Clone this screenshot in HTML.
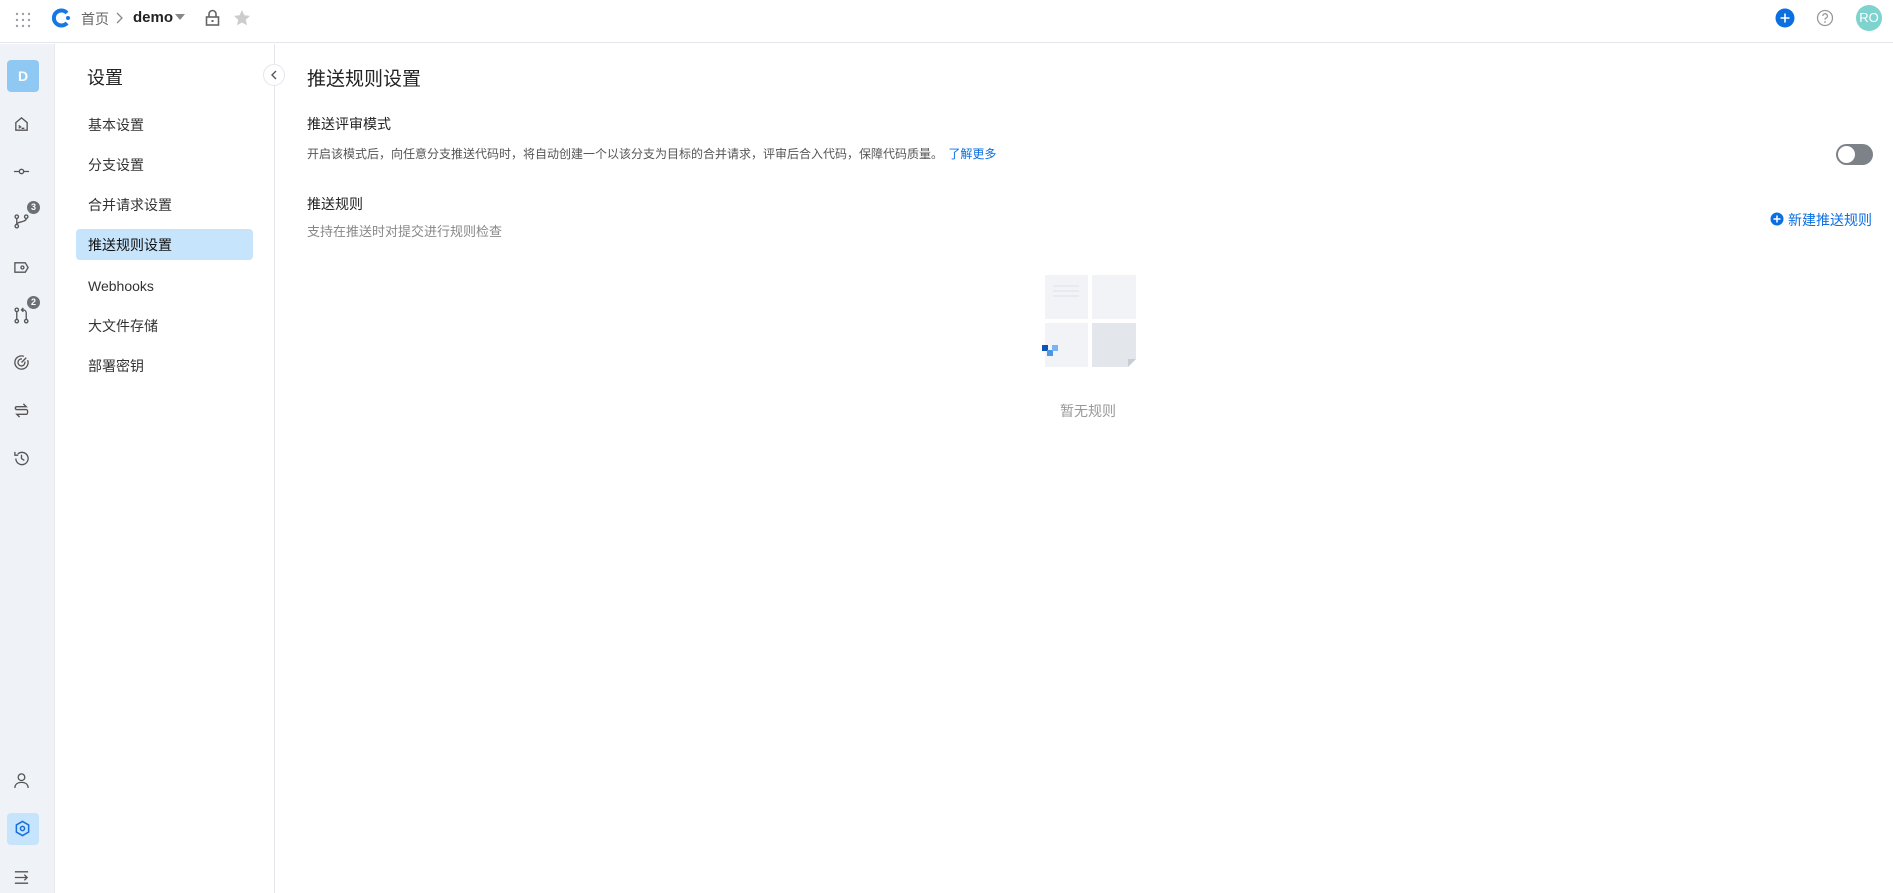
<!DOCTYPE html>
<html><head><meta charset="utf-8"><style>
*{margin:0;padding:0;box-sizing:border-box}
body{width:1893px;height:893px;overflow:hidden;background:#fff;font-family:"Liberation Sans","Noto Sans CJK SC",sans-serif;color:#1f2329;position:relative}
.abs{position:absolute}
.hdr{left:0;top:0;width:1893px;height:43px;border-bottom:1px solid #e5e6eb;background:#fff}
.rail{left:0;top:44px;width:55px;height:849px;background:#eff2f6;border-right:1px solid #e8eaee}
.nav{left:55px;top:44px;width:220px;height:849px;background:#fff;border-right:1px solid #e5e6eb}
.ni{position:absolute;left:88px;font-size:14px;color:#333;line-height:20px}
.ic{position:absolute;left:13px;width:17px;height:17px}
.badge{position:absolute;width:13px;height:13px;border-radius:50%;background:#6b7075;color:#fff;font-size:9px;font-weight:bold;text-align:center;line-height:13px}
</style></head><body>
<div class="abs hdr"></div>
<svg class="abs" style="left:15px;top:12px" width="16" height="16"><g fill="#9aa0a6"><circle cx="2" cy="2" r="1.2"/><circle cx="8" cy="2" r="1.2"/><circle cx="14" cy="2" r="1.2"/><circle cx="2" cy="8" r="1.2"/><circle cx="8" cy="8" r="1.2"/><circle cx="14" cy="8" r="1.2"/><circle cx="2" cy="14" r="1.2"/><circle cx="8" cy="14" r="1.2"/><circle cx="14" cy="14" r="1.2"/></g></svg>
<svg class="abs" style="left:52px;top:8px" width="20" height="20"><path d="M15 5 A7.5 7.5 0 1 0 15 15" fill="none" stroke="#1677e5" stroke-width="4"/><circle cx="16" cy="10" r="2" fill="#1677e5"/></svg>
<div class="abs" style="left:81px;top:9px;font-size:14px;color:#666">首页</div>
<svg class="abs" style="left:115px;top:12px" width="8" height="12"><path d="M2 1l5 5-5 5" fill="none" stroke="#888" stroke-width="1.3"/></svg>
<div class="abs" style="left:133px;top:9px;font-size:15px;font-weight:bold;color:#222">demo</div>
<svg class="abs" style="left:175px;top:14px" width="10" height="6"><path d="M0 0h10L5 6z" fill="#888"/></svg>
<svg class="abs" style="left:205px;top:9px" width="15" height="18"><path d="M4 8V5a3.5 3.5 0 0 1 7 0v3" fill="none" stroke="#666" stroke-width="1.6"/><rect x="1.5" y="8" width="12" height="8" fill="none" stroke="#666" stroke-width="1.6"/><rect x="6.5" y="11" width="2" height="2" fill="#666"/></svg>
<svg class="abs" style="left:233px;top:9px" width="18" height="18"><path d="M9 1l2.4 5.3 5.6.6-4.2 3.8 1.2 5.6L9 13.5 4 16.3l1.2-5.6L1 6.9l5.6-.6z" fill="#ccc"/></svg>
<svg class="abs" style="left:1775px;top:8px" width="20" height="20"><circle cx="10" cy="10" r="9.5" fill="#0b6fe0"/><path d="M10 5.5v9M5.5 10h9" stroke="#fff" stroke-width="1.6"/></svg>
<svg class="abs" style="left:1816px;top:9px" width="18" height="18"><circle cx="9" cy="9" r="7.5" fill="none" stroke="#999" stroke-width="1.3"/><path d="M6.8 7a2.3 2.3 0 1 1 3 2.2c-.6.3-.8.7-.8 1.5" fill="none" stroke="#999" stroke-width="1.3"/><circle cx="9" cy="13" r=".9" fill="#999"/></svg>
<div class="abs" style="left:1856px;top:5px;width:26px;height:26px;border-radius:50%;background:#7ed3cf;color:#fff;font-size:13px;text-align:center;line-height:26px">RO</div>

<div class="abs rail">
<div style="position:absolute;left:7px;top:16px;width:32px;height:32px;border-radius:4px;background:#8fc9f3;color:#fff;font-weight:bold;font-size:14px;text-align:center;line-height:32px">D</div>
<svg class="ic" style="top:72px" viewBox="0 0 18 18" fill="none" stroke="#555" stroke-width="1.4"><path d="M3 7l6-5 6 5v8H3z"/><path d="M6 10l2 1.5L6 13M9 13h3"/></svg>
<svg class="ic" style="top:119px" viewBox="0 0 18 18" fill="none" stroke="#555" stroke-width="1.4"><circle cx="9" cy="9" r="2.3"/><path d="M1 9h5.7M11.3 9H17"/></svg>
<svg class="ic" style="top:168px" viewBox="0 0 18 18" fill="none" stroke="#555" stroke-width="1.4"><circle cx="4" cy="15" r="1.8"/><circle cx="4" cy="5" r="1.8"/><circle cx="14" cy="5" r="1.8"/><path d="M4 7v6M14 7c0 4-10 3-10 6"/></svg>
<div class="badge" style="left:27px;top:157px">3</div>
<svg class="ic" style="top:215px" viewBox="0 0 18 18" fill="none" stroke="#555" stroke-width="1.4"><path d="M2 4h11l3 5-3 5H2z"/><circle cx="10" cy="9" r="1.6"/></svg>
<svg class="ic" style="top:263px" viewBox="0 0 18 18" fill="none" stroke="#555" stroke-width="1.4"><circle cx="4" cy="15" r="1.8"/><circle cx="4" cy="3" r="1.8"/><circle cx="14" cy="15" r="1.8"/><path d="M4 5v8M14 13V6c0-2-2-3-4-3M11 1l-2 2 2 2"/></svg>
<div class="badge" style="left:27px;top:252px">2</div>
<svg class="ic" style="top:310px" viewBox="0 0 18 18" fill="none" stroke="#555" stroke-width="1.4"><path d="M15.5 6.5A7 7 0 1 1 11.5 2.5"/><path d="M12.5 8A3.7 3.7 0 1 1 9.5 5.3"/><path d="M9 9l5-5"/></svg>
<svg class="ic" style="top:358px" viewBox="0 0 18 18" fill="none" stroke="#555" stroke-width="1.4"><path d="M4 5h10l-3-3M14 13H4l3 3M4 5c-2 0-2 3 0 3h10c2 0 2 5 0 5"/></svg>
<svg class="ic" style="top:406px" viewBox="0 0 18 18" fill="none" stroke="#555" stroke-width="1.4"><path d="M3 9a6.5 6.5 0 1 0 2-4.7M2 2v3.5h3.5"/><path d="M9 5v4l3 2"/></svg>
<svg class="ic" style="top:728px" viewBox="0 0 18 18" fill="none" stroke="#555" stroke-width="1.4"><circle cx="9" cy="5.5" r="3.5"/><path d="M2 17c0-4 3-6 7-6s7 2 7 6"/></svg>
<div style="position:absolute;left:7px;top:769px;width:32px;height:32px;border-radius:4px;background:#c6e4fb"></div>
<svg class="ic" style="top:776px;left:14px" viewBox="0 0 18 18" fill="none" stroke="#1a6fd8" stroke-width="1.6"><path d="M9 1.5l6.5 3.75v7.5L9 16.5 2.5 12.75v-7.5z"/><circle cx="9" cy="9" r="2.2"/></svg>
<svg class="ic" style="top:825px" viewBox="0 0 18 18" fill="none" stroke="#555" stroke-width="1.4"><path d="M2 3h14M2 9h12M2 15h14M12 6l3 3-3 3"/></svg>
</div>

<div class="abs nav"></div>
<div class="abs" style="left:87px;top:64px;font-size:18px;color:#222">设置</div>
<div class="abs" style="left:263px;top:64px;width:22px;height:22px;border-radius:50%;background:#fff;border:1px solid #e5e6eb"></div>
<svg class="abs" style="left:270px;top:70px" width="8" height="10"><path d="M6 1L2 5l4 4" fill="none" stroke="#555" stroke-width="1.4"/></svg>
<div class="abs" style="left:76px;top:229px;width:177px;height:31px;border-radius:4px;background:#c6e4fb"></div>
<div class="ni" style="top:115px">基本设置</div>
<div class="ni" style="top:155px">分支设置</div>
<div class="ni" style="top:195px">合并请求设置</div>
<div class="ni" style="top:235px;color:#111">推送规则设置</div>
<div class="ni" style="top:276px">Webhooks</div>
<div class="ni" style="top:316px">大文件存储</div>
<div class="ni" style="top:356px">部署密钥</div>

<div class="abs" style="left:307px;top:64px;font-size:19px;color:#222">推送规则设置</div>
<div class="abs" style="left:307px;top:114px;font-size:14px;color:#222">推送评审模式</div>
<div class="abs" style="left:307px;top:145px;font-size:12px;color:#555;white-space:nowrap">开启该模式后，向任意分支推送代码时，将自动创建一个以该分支为目标的合并请求，评审后合入代码，保障代码质量。 <span style="color:#0b6fe0;margin-left:2px">了解更多</span></div>
<div class="abs" style="left:1836px;top:144px;width:37px;height:21px;border-radius:11px;background:#7d8289"></div>
<div class="abs" style="left:1838px;top:146px;width:17px;height:17px;border-radius:50%;background:#fff"></div>
<div class="abs" style="left:307px;top:194px;font-size:14px;color:#222">推送规则</div>
<div class="abs" style="left:307px;top:221px;font-size:13px;color:#888">支持在推送时对提交进行规则检查</div>
<svg class="abs" style="left:1770px;top:212px" width="14" height="14"><circle cx="7" cy="7" r="6.5" fill="#0b6fe0"/><path d="M7 3.5v7M3.5 7h7" stroke="#fff" stroke-width="1.5"/></svg>
<div class="abs" style="left:1788px;top:210px;font-size:14px;color:#0b6fe0">新建推送规则</div>

<svg class="abs" style="left:1040px;top:272px" width="100" height="100">
<rect x="5" y="3" width="43" height="44" fill="#f1f3f6"/><rect x="52" y="3" width="44" height="44" fill="#f1f3f6"/>
<rect x="5" y="51" width="43" height="44" fill="#f1f3f6"/><path d="M52 51h44v36l-8 8H52z" fill="#e3e7ec"/><path d="M88 95l8-8h-8z" fill="#c9ced5"/>
<path d="M13 14h26M13 19h26M13 24h26" stroke="#dde0e5" stroke-width="1"/>
<rect x="2" y="73" width="6" height="6" fill="#0b55b5"/><rect x="7" y="78" width="6" height="6" fill="#4a97ea"/><rect x="12" y="73" width="6" height="6" fill="#7ab5f0"/>
</svg>
<div class="abs" style="left:1060px;top:401px;font-size:14px;color:#999">暂无规则</div>
</body></html>
